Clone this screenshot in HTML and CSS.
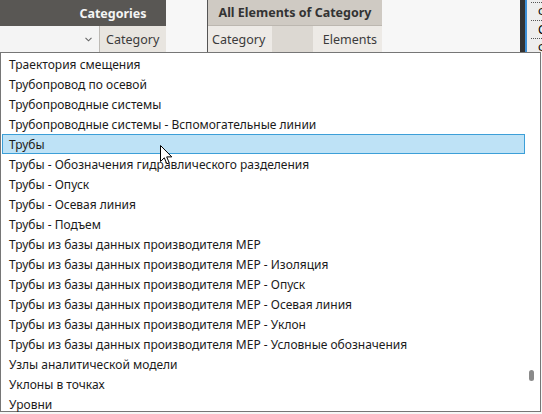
FILE: index.html
```html
<!DOCTYPE html>
<html>
<head>
<meta charset="utf-8">
<link rel="stylesheet" href="styles.css">
</head>
<body>
<div class="canvas">
  <div class="node node-dark">
    <div class="node-head">Categories</div>
    <div class="node-row">
      <div class="combo"><svg class="chev" width="7" height="5" viewBox="0 0 7 5"><path d="M0.5 0.8 L3.5 3.8 L6.5 0.8" fill="none" stroke="#666" stroke-width="1.1"/></svg></div>
      <div class="port">Category</div>
    </div>
  </div>
  <div class="node node-light">
    <div class="node-head">All Elements of Category</div>
    <div class="node-row">
      <div class="port in">Category</div>
      <div class="gap"></div>
      <div class="port out">Elements</div>
    </div>
  </div>
  <div class="watch">
    <div class="wbar"></div>
    <div class="wline"></div>
    <div class="wpanel">
      <div class="witem">Ф</div>
      <div class="witem">С</div>
      <div class="witem">Ф</div>
    </div>
  </div>
</div>
<div class="dropdown">
  <ul class="list">
    <li>Траектория смещения</li>
    <li>Трубопровод по осевой</li>
    <li>Трубопроводные системы</li>
    <li>Трубопроводные системы - Вспомогательные линии</li>
    <li class="sel">Трубы</li>
    <li>Трубы - Обозначения гидравлического разделения</li>
    <li>Трубы - Опуск</li>
    <li>Трубы - Осевая линия</li>
    <li>Трубы - Подъем</li>
    <li>Трубы из базы данных производителя MEP</li>
    <li>Трубы из базы данных производителя MEP - Изоляция</li>
    <li>Трубы из базы данных производителя MEP - Опуск</li>
    <li>Трубы из базы данных производителя MEP - Осевая линия</li>
    <li>Трубы из базы данных производителя MEP - Уклон</li>
    <li>Трубы из базы данных производителя MEP - Условные обозначения</li>
    <li>Узлы аналитической модели</li>
    <li>Уклоны в точках</li>
    <li>Уровни</li>
  </ul>
  <div class="scroll"><div class="thumb"></div></div>
</div>
<svg class="cursor" width="13" height="20" viewBox="0 0 13 20"><path d="M0.5 0.5 L0.5 16.5 L4.3 12.8 L6.8 18.8 L9.2 17.8 L6.7 11.9 L11.8 11.9 Z" fill="#fff" stroke="#000" stroke-width="1" stroke-linejoin="miter"/></svg>
</body>
</html>
```
FILE: styles.css
```css
html, body {
  margin: 0;
  padding: 0;
}
body {
  width: 542px;
  height: 414px;
  background: #f7f7f7;
  position: relative;
  overflow: hidden;
  font-family: "Noto Sans", "Open Sans", sans-serif;
  font-size: 12px;
  color: #1b1b1b;
}
.canvas {
  position: relative;
  height: 52px;
  background: #f7f7f7;
}
.node {
  position: absolute;
  top: 0;
  display: flex;
  flex-direction: column;
}
.node-head {
  height: 26px;
  display: flex;
  align-items: center;
  justify-content: center;
  font-weight: bold;
  font-size: 12.5px;
}
.node-row {
  height: 26px;
  display: flex;
}
.node-dark {
  left: 0;
  width: 166px;
}
.node-dark .node-head {
  background: #595754;
  color: #f4f4f4;
  padding-left: 60px;
}
.combo {
  width: 100px;
  background: #f4f4f4;
  border-right: 1px solid #bdbab5;
  display: flex;
  align-items: center;
  justify-content: flex-end;
  padding-right: 7px;
  box-sizing: border-box;
}
.chev {
  display: block;
  margin-top: 1px;
}
.port {
  display: flex;
  align-items: center;
  background: #e8e5e0;
  color: #3b3b3b;
  font-size: 12.5px;
  padding: 0 6px;
}
.node-dark .port {
  flex: 1;
  padding-left: 6px;
}
.node-light {
  left: 207px;
  width: 175px;
  border-left: 1px solid #555;
  box-sizing: border-box;
}
.node-light .node-head {
  background: #cfcac3;
  color: #333;
  border-bottom: 1px solid #bcb7b0;
  box-sizing: border-box;
}
.node-light .port {
  background: #edeae6;
}
.port.in {
  width: 64px;
  padding-left: 4px;
  box-sizing: border-box;
}
.gap {
  width: 41px;
  background: #dcd8d2;
}
.port.out {
  flex: 1;
  justify-content: flex-end;
  padding-right: 5px;
}
.watch {
  position: absolute;
  left: 520px;
  top: 0;
  width: 22px;
  height: 52px;
  display: flex;
}
.wbar {
  width: 5px;
  background: #333;
}
.wline {
  width: 2px;
  background: #3d8fd6;
}
.wpanel {
  flex: 1;
  background: #eeeeee;
  overflow: hidden;
  padding-top: 2px;
  padding-left: 4px;
}
.witem {
  height: 17px;
  border-top: 1px dotted #555;
  font-size: 12px;
  line-height: 17px;
  padding-left: 7px;
  color: #000;
  white-space: nowrap;
}
.dropdown {
  position: absolute;
  left: 0;
  top: 52px;
  width: 541px;
  height: 360px;
  background: #fff;
  border: 1px solid #767676;
  box-sizing: border-box;
  display: flex;
}
.list {
  list-style: none;
  margin: 0;
  padding: 1px 0 0 1px;
  flex: 1;
}
.list li {
  height: 20px;
  line-height: 19px;
  padding-left: 6px;
  box-sizing: border-box;
  white-space: nowrap;
  border: 1px solid transparent;
}
.list li.sel {
  background: #bee2f6;
  border-color: #3c9fd8;
}
.scroll {
  width: 15px;
  position: relative;
}
.thumb {
  position: absolute;
  left: 4px;
  top: 317px;
  width: 5px;
  height: 11px;
  border-radius: 3px;
  background: #8a8a8a;
}
.cursor {
  position: absolute;
  left: 160px;
  top: 145px;
}
```
